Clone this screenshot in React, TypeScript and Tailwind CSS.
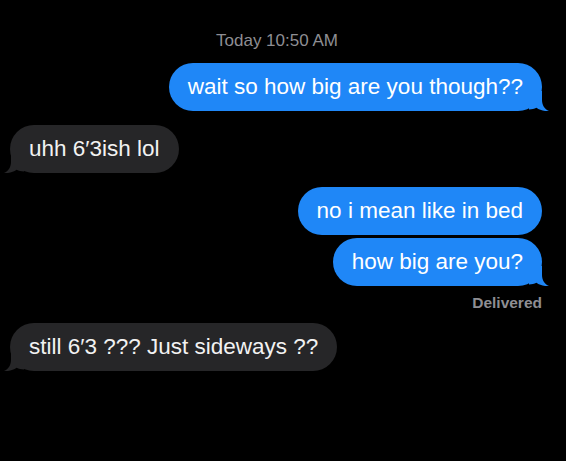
import React from "react";

const font = { fontFamily: '"Liberation Sans", Arial, sans-serif' };

function Tail({ side, color }: { side: "left" | "right"; color: string }) {
  const flip = side === "left";
  return (
    <svg
      width="20"
      height="20"
      viewBox="0 0 20 20"
      className={flip ? "absolute -left-[6px] bottom-0 -scale-x-100" : "absolute -right-[7px] bottom-0"}
    >
      <path
        d="M0 0 H13 V9 C13 14 15.5 18 20 20 C15 20.5 10.5 19 7.5 16.8 C5 18 3 18.5 0 18.5 Z"
        fill={color}
      />
    </svg>
  );
}

function Bubble({
  text,
  side,
  tail,
}: {
  text: string;
  side: "left" | "right";
  tail?: boolean;
}) {
  const mine = side === "right";
  return (
    <div className={mine ? "flex justify-end pr-[24px]" : "flex justify-start pl-[10px]"}>
      <div
        className={
          mine
            ? "relative h-[48px] flex items-center rounded-[24px] bg-[#1f87f7] px-[19px] text-white text-[22.5px]"
            : "relative h-[48px] flex items-center rounded-[24px] bg-[#262628] px-[19px] text-[#f2f2f2] text-[22.5px]"
        }
      >
        {tail && <Tail side={side} color={mine ? "#1f87f7" : "#262628"} />}
        <span className="relative">{text}</span>
      </div>
    </div>
  );
}

export default function App() {
  return (
    <div className="w-[566px] h-[461px] bg-black overflow-hidden" style={font}>
      <div className="pt-[29px] leading-[24px] text-center text-[17px] text-[#8e8e93] pr-[12px]">Today 10:50 AM</div>
      <div className="mt-[10px]">
        <Bubble text="wait so how big are you though??" side="right" tail />
      </div>
      <div className="mt-[14px]">
        <Bubble text="uhh 6′3ish lol" side="left" tail />
      </div>
      <div className="mt-[14px]">
        <Bubble text="no i mean like in bed" side="right" />
      </div>
      <div className="mt-[3px]">
        <Bubble text="how big are you?" side="right" tail />
      </div>
      <div className="mt-[5px] leading-[24px] pr-[24px] text-right text-[15.5px] font-bold text-[#8e8e93]">Delivered</div>
      <div className="mt-[8px]">
        <Bubble text="still 6′3 ??? Just sideways ??" side="left" tail />
      </div>
    </div>
  );
}
